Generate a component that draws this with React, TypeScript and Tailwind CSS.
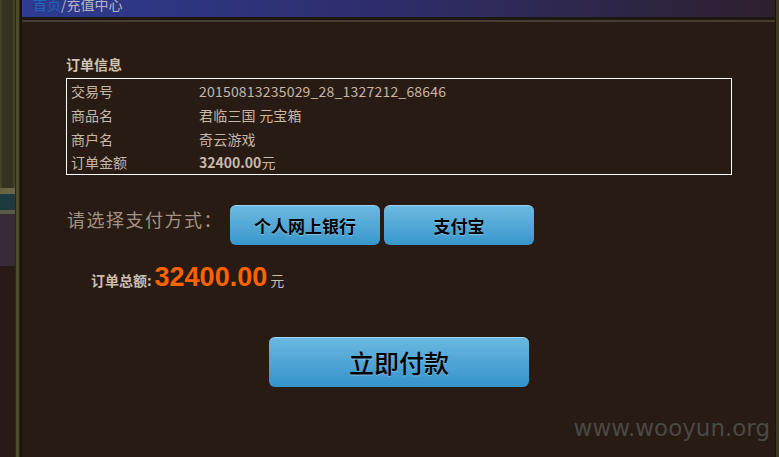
const rows = [
  { label: "交易号", value: "20150813235029_28_1327212_68646" },
  { label: "商品名", value: "君临三国 元宝箱" },
  { label: "商户名", value: "奇云游戏" },
];

const cjk = "font-['Noto_Sans_CJK_SC',sans-serif]";

const App = () => {
  return (
    <div className="flex h-[457px] w-[779px] overflow-hidden bg-[#281b13]">
      {/* left game frame */}
      <div className="flex w-[22px] shrink-0">
        <div className="flex w-[15px] flex-col bg-[#2c2918]">
          <div className="h-[188px] border-x-2 border-[#454126] bg-[#35321d]" />
          <div className="h-[6px] bg-[#6b6444]" />
          <div className="h-[16px] bg-[#1d3a3e]" />
          <div className="h-[4px] bg-[#5a5a48]" />
          <div className="h-[52px] bg-[#392a37]" />
          <div className="flex-1 bg-[#2a1a15]" />
        </div>
        <div className="w-[5px] border-x border-[#2a2814] bg-[#4d4a2a]" />
        <div className="w-[2px] bg-[#1a140c]" />
      </div>

      {/* main panel */}
      <div className="relative flex flex-1 flex-col">
        <div className="h-[17px] overflow-hidden bg-gradient-to-r from-[#2d3b91] via-[#2e2d6a] to-[#2e1f2e] pl-[11px]">
          <div className={`mt-[-5px] text-[14px] leading-[18px] ${cjk}`}>
            <span className="text-[#1f66b5]">首页</span>
            <span className="text-[#b8b4c4]">/充值中心</span>
          </div>
        </div>
        <div className="h-[5px] border-b-2 border-[#463c32] bg-[#1e1610]" />

        <div className="flex flex-col pl-[44px] pt-[33px]">
          <h2 className={`text-[14px] font-bold leading-[18px] text-[#d2c2b2] ${cjk}`}>
            订单信息
          </h2>
          <div className={`mt-[5px] w-[666px] border border-white pl-[4px] text-[14px] text-[#c6b6a6] ${cjk}`}>
            {rows.map((row) => (
              <div key={row.label} className="flex h-[24px] items-center">
                <span className="w-[128px]">{row.label}</span>
                <span className="tracking-[0.2px]">{row.value}</span>
              </div>
            ))}
            <div className="flex h-[23px] items-center">
              <span className="w-[128px]">订单金额</span>
              <span>
                <b className="font-bold text-[#c8b8a8]">32400.00</b>元
              </span>
            </div>
          </div>

          <div className="mt-[30px] flex items-start">
            <span className={`ml-[1px] mt-[2px] w-[163px] text-[18px] leading-[24px] tracking-[1.5px] text-[#a39282] ${cjk}`}>
              请选择支付方式：
            </span>
            <div className="flex gap-[4px]">
              <button className={`h-[40px] w-[150px] rounded-[6px] border-t border-[#9ad2ee] bg-gradient-to-b from-[#6cb9e1] to-[#3797cb] text-[17px] font-semibold text-black [text-shadow:0_1px_1px_rgba(255,255,255,0.35)] ${cjk}`}>
                个人网上银行
              </button>
              <button className={`h-[40px] w-[150px] rounded-[6px] border-t border-[#9ad2ee] bg-gradient-to-b from-[#6cb9e1] to-[#3797cb] text-[17px] font-semibold text-black [text-shadow:0_1px_1px_rgba(255,255,255,0.35)] ${cjk}`}>
                支付宝
              </button>
            </div>
          </div>

          <div className="ml-[25px] mt-[16px] flex items-baseline">
            <span className={`text-[14px] font-bold text-[#cdbdad] ${cjk}`}>订单总额:</span>
            <span className="ml-[3px] font-['Liberation_Sans',sans-serif] text-[27px] font-bold leading-[32px] text-[#ff6300]">
              32400.00
            </span>
            <span className={`ml-[3px] text-[14px] text-[#cdbdad] ${cjk}`}>元</span>
          </div>

          <button className={`ml-[203px] mt-[44px] h-[50px] w-[260px] rounded-[6px] border-t border-[#a0d6f0] bg-gradient-to-b from-[#6ab8e0] to-[#3393ca] text-[25px] font-medium text-black [text-shadow:0_1px_1px_rgba(255,255,255,0.35)] ${cjk}`}>
            立即付款
          </button>
        </div>

        <span className="absolute bottom-[12px] right-[5px] font-['DejaVu_Sans',sans-serif] text-[23px] text-[#4a4946]">
          www.wooyun.org
        </span>
      </div>

      {/* right frame */}
      <div className="flex w-[4px] shrink-0">
        <div className="w-[1px] bg-[#1a140c]" />
        <div className="w-[3px] bg-[#3e3b22]" />
      </div>
    </div>
  );
};

export default App;
